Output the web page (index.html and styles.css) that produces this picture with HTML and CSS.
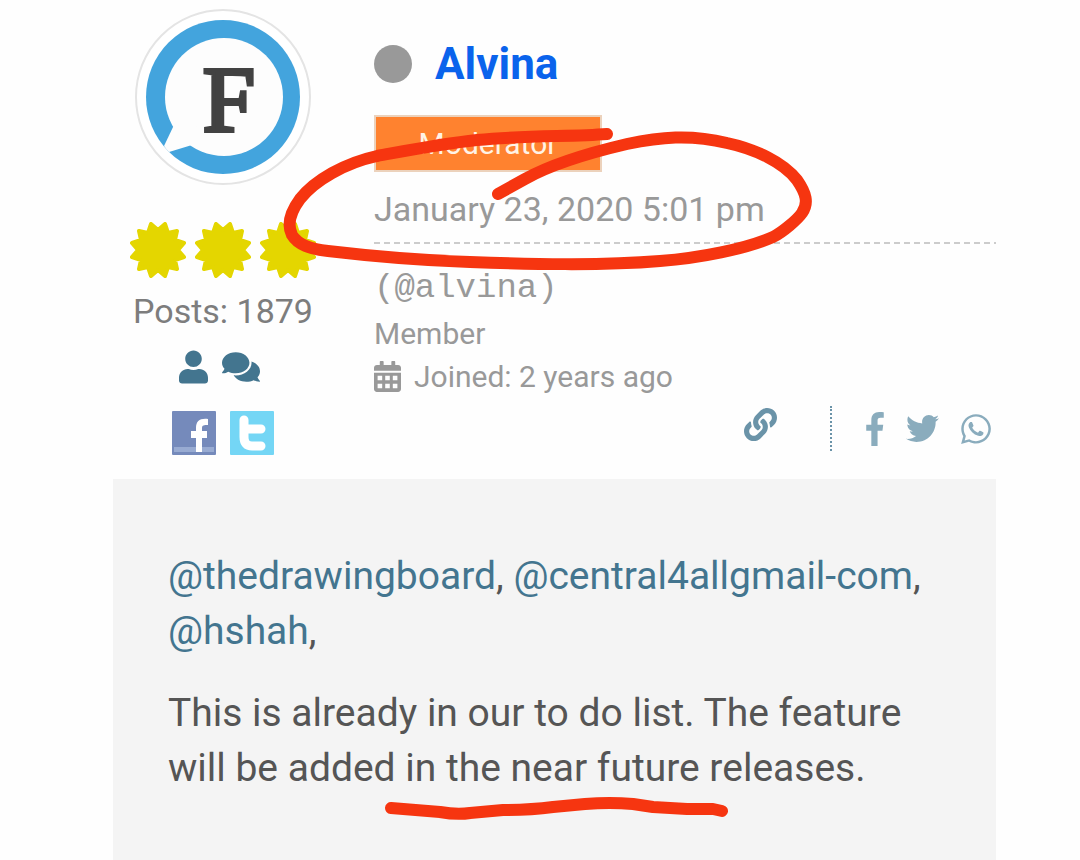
FILE: index.html
```
<!DOCTYPE html>
<html lang="en">
<head>
<meta charset="utf-8">
<meta name="viewport" content="width=device-width, initial-scale=1">
<title>Forum post</title>
<link rel="stylesheet" href="styles.css">
</head>
<body>
<article class="post">
  <header class="post-head">
    <aside class="author">
      <svg class="avatar" viewBox="0 0 176 176" role="img" aria-label="Alvina">
        <circle cx="88" cy="88" r="87" fill="#fff" stroke="#e4e4e4" stroke-width="2"/>
        <circle cx="88" cy="88" r="77" fill="#43a4dd"/>
        <circle cx="89" cy="88" r="59" fill="#fdfdfd"/>
        <path d="M39 116L29 137Q31 140 34 143L57 136L66 118Z" fill="#fdfdfd"/>
        <text class="avatar-letter" x="94" y="122" text-anchor="middle">F</text>
      </svg>
      <div class="seals">
        <svg class="seal" viewBox="-28 -28 56 56"><path d="M0-20L7-26 10-17 19-19 17-10 26-7 20 0 26 7 17 10 19 19 10 17 7 26 0 20-7 26-10 17-19 19-17 10-26 7-20 0-26-7-17-10-19-19-10-17-7-26Z"/></svg>
        <svg class="seal" viewBox="-28 -28 56 56"><path d="M0-20L7-26 10-17 19-19 17-10 26-7 20 0 26 7 17 10 19 19 10 17 7 26 0 20-7 26-10 17-19 19-17 10-26 7-20 0-26-7-17-10-19-19-10-17-7-26Z"/></svg>
        <svg class="seal" viewBox="-28 -28 56 56"><path d="M0-20L7-26 10-17 19-19 17-10 26-7 20 0 26 7 17 10 19 19 10 17 7 26 0 20-7 26-10 17-19 19-17 10-26 7-20 0-26-7-17-10-19-19-10-17-7-26Z"/></svg>
      </div>
      <div class="posts">Posts: 1879</div>
      <nav class="profile-links" aria-label="Profile">
        <a href="#profile" aria-label="Profile"><svg class="icon-user" viewBox="0 0 448 512"><path d="M224 256c70.700 0 128-57.300 128-128S294.700 0 224 0 96 57.300 96 128s57.300 128 128 128zm89.600 32h-16.700c-22.200 10.200-46.900 16-72.900 16s-50.600-5.800-72.900-16h-16.700C60.200 288 0 348.200 0 422.400V464c0 26.500 21.500 48 48 48h352c26.500 0 48-21.500 48-48v-41.600c0-74.200-60.200-134.400-134.400-134.400z"/></svg></a>
        <a href="#activity" aria-label="Activity"><svg class="icon-comments" viewBox="0 0 576 512"><path d="M416 192c0-88.400-93.100-160-208-160S0 103.600 0 192c0 34.300 14.100 65.900 38 92-13.400 30.200-35.500 54.200-35.800 54.500-2.200 2.300-2.800 5.700-1.500 8.700S4.800 352 8 352c36.600 0 66.900-12.300 88.700-25 32.200 15.700 70.300 25 111.300 25 114.900 0 208-71.600 208-160zm122 220c23.900-26 38-57.700 38-92 0-66.900-53.500-124.200-129.300-148.100.9 6.600 1.300 13.300 1.300 20.100 0 105.900-107.700 192-240 192-10.800 0-21.300-.8-31.700-1.900C207.800 439.600 281.800 480 368 480c41 0 79.100-9.200 111.300-25 21.800 12.700 52.100 25 88.700 25 3.200 0 6.100-1.900 7.300-4.800 1.300-2.900.7-6.300-1.500-8.700-.3-.3-22.400-24.200-35.800-54.500z"/></svg></a>
      </nav>
      <nav class="social" aria-label="Social profiles">
        <a href="#facebook" aria-label="Facebook"><svg viewBox="0 0 44 44"><rect width="44" height="44" rx="1" fill="#758abb"/><rect x="2" y="36" width="40" height="5" fill="#98abd2"/><path d="M24 41V27h-5v-7h5v-3c0-7 4-10 12-9v6c-4 0-6 0-6 3v3h5v7h-5v14z" fill="#fff"/></svg></a>
        <a href="#twitter" aria-label="Twitter"><svg viewBox="0 0 44 44"><rect width="44" height="44" rx="1" fill="#74d6f5"/><path d="M14 9V26Q14 35 22 35H31M14 18H31" fill="none" stroke="#fff" stroke-width="9" stroke-linecap="round" stroke-linejoin="round"/></svg></a>
      </nav>
    </aside>
    <div class="details">
      <div class="name-row"><span class="status"></span><a class="name" href="#alvina">Alvina</a></div>
      <div class="role">Moderator</div>
      <time class="date" datetime="2020-01-23T17:01">January 23, 2020 5:01 pm</time>
      <div class="handle">(@alvina)</div>
      <div class="meta">Member</div>
      <div class="meta joined"><svg class="icon-calendar" viewBox="0 0 448 512"><path fill-rule="evenodd" d="M400 64h-48V16c0-9-7-16-16-16h-32c-9 0-16 7-16 16v48H160V16c0-9-7-16-16-16h-32c-9 0-16 7-16 16v48H48C21 64 0 85 0 112v48h448v-48c0-27-21-48-48-48zM0 192v272c0 27 21 48 48 48h352c27 0 48-21 48-48V192zM60 244h76v76H60zM186 244h76v76h-76zM312 244h76v76h-76zM60 376h76v76H60zM186 376h76v76h-76zM312 376h76v76h-76z"/></svg>Joined: 2 years ago</div>
      <div class="share">
        <a class="share-link" href="#link" aria-label="Link to post"><svg class="icon-link" viewBox="0 0 512 512"><path d="M326.612 185.391c59.747 59.809 58.927 155.698.36 214.590-.11.12-.24.25-.36.37l-67.200 67.200c-59.270 59.270-155.699 59.262-214.960 0-59.270-59.260-59.270-155.700 0-214.960l37.106-37.106c9.840-9.840 26.786-3.300 27.294 10.606.648 17.722 3.826 35.527 9.690 52.721 1.986 5.822.567 12.262-3.783 16.612l-13.087 13.087c-28.026 28.026-28.905 73.660-1.155 101.960 28.024 28.579 74.086 28.749 102.325.51l67.200-67.190c28.191-28.191 28.073-73.757 0-101.830-3.701-3.694-7.429-6.564-10.341-8.569a16.037 16.037 0 0 1-6.947-12.606c-.396-10.567 3.348-21.456 11.698-29.806l21.054-21.055c5.521-5.521 14.182-6.199 20.584-1.731a152.482 152.482 0 0 1 20.522 17.197zM467.547 44.449c-59.261-59.262-155.690-59.270-214.960 0l-67.200 67.200c-.12.12-.25.25-.36.37-58.566 58.892-59.387 154.781.36 214.590a152.454 152.454 0 0 0 20.521 17.196c6.402 4.468 15.064 3.789 20.584-1.731l21.054-21.055c8.350-8.350 12.094-19.239 11.698-29.806a16.037 16.037 0 0 0-6.947-12.606c-2.912-2.005-6.640-4.875-10.341-8.569-28.073-28.073-28.191-73.639 0-101.830l67.200-67.190c28.239-28.239 74.300-28.069 102.325.51 27.750 28.300 26.872 73.934-1.155 101.960l-13.087 13.087c-4.350 4.350-5.769 10.790-3.783 16.612 5.864 17.194 9.042 34.999 9.690 52.721.509 13.906 17.454 20.446 27.294 10.606l37.106-37.106c59.271-59.259 59.271-155.699.001-214.959z"/></svg></a>
        <div class="share-targets">
          <a href="#share-facebook" aria-label="Share on Facebook"><svg class="icon-fb" viewBox="0 0 264 512"><path d="M76.700 512V283H0v-91h76.700v-71.700C76.700 42.400 124.300 0 193.800 0c33.300 0 61.900 2.500 70.200 3.600V85h-48.200c-37.800 0-45.100 18-45.100 44.300V192H256l-11.700 91h-73.600v229"/></svg></a>
          <a href="#share-twitter" aria-label="Share on Twitter"><svg class="icon-round" viewBox="0 0 512 512"><path d="M459.370 151.716c.325 4.548.325 9.097.325 13.645 0 138.720-105.583 298.558-298.558 298.558-59.452 0-114.680-17.219-161.137-47.106 8.447.974 16.568 1.299 25.340 1.299 49.055 0 94.213-16.568 130.274-44.832-46.132-.975-84.792-31.188-98.112-72.772 6.498.974 12.995 1.624 19.818 1.624 9.421 0 18.843-1.300 27.614-3.573-48.081-9.747-84.143-51.980-84.143-102.985v-1.299c13.969 7.797 30.214 12.670 47.431 13.319-28.264-18.843-46.781-51.005-46.781-87.391 0-19.492 5.197-37.360 14.294-52.954 51.655 63.675 129.300 105.258 216.365 109.807-1.624-7.797-2.599-15.918-2.599-24.040 0-57.828 46.782-104.934 104.934-104.934 30.213 0 57.502 12.670 76.670 33.137 23.715-4.548 46.456-13.320 66.599-25.340-7.798 24.366-24.366 44.833-46.132 57.827 21.117-2.273 41.584-8.122 60.426-16.243-14.292 20.791-32.161 39.308-52.628 54.253z"/></svg></a>
          <a href="#share-whatsapp" aria-label="Share on WhatsApp"><svg class="icon-wa" viewBox="0 0 448 512"><path d="M380.900 97.100C339 55.100 283.200 32 223.900 32c-122.400 0-222 99.600-222 222 0 39.100 10.200 77.300 29.600 111L0 480l117.700-30.900c32.400 17.700 68.900 27 106.100 27h.1c122.300 0 224.100-99.600 224.100-222 0-59.300-25.200-115-67.100-157zm-157 341.600c-33.200 0-65.700-8.900-94-25.700l-6.700-4-69.800 18.300L72 359.200l-4.400-7c-18.500-29.400-28.200-63.300-28.200-98.200 0-101.700 82.800-184.500 184.600-184.500 49.300 0 95.600 19.200 130.400 54.100 34.800 34.900 56.200 81.200 56.100 130.500 0 101.800-84.900 184.600-186.600 184.600zm101.200-138.200c-5.500-2.800-32.800-16.200-37.900-18-5.100-1.900-8.800-2.800-12.500 2.800-3.700 5.600-14.300 18-17.600 21.800-3.200 3.700-6.500 4.200-12 1.400-32.600-16.300-54-29.100-75.500-66-5.700-9.800 5.700-9.100 16.300-30.300 1.800-3.700.9-6.900-.5-9.700-1.400-2.800-12.500-30.100-17.100-41.200-4.500-10.800-9.100-9.300-12.500-9.500-3.200-.2-6.900-.2-10.600-.2-3.700 0-9.700 1.400-14.800 6.900-5.100 5.600-19.400 19-19.400 46.300 0 27.300 19.900 53.700 22.600 57.400 2.800 3.700 39.100 59.700 94.800 83.800 35.200 15.200 49 16.500 66.600 13.900 10.700-1.600 32.800-13.400 37.400-26.400 4.600-13 4.600-24.100 3.200-26.400-1.300-2.500-5-3.900-10.500-6.600z"/></svg></a>
        </div>
      </div>
    </div>
  </header>
  <section class="post-body">
    <p><a href="#thedrawingboard">@thedrawingboard</a>, <a href="#central4all">@central4allgmail-com</a>, <a href="#hshah">@hshah</a>,</p>
    <p>This is already in our to do list. The feature will be added in the near future releases.</p>
  </section>
  <svg class="markup" width="1080" height="860" viewBox="0 0 1080 860" aria-hidden="true">
    <path d="M607 134C570 137 530 135 477 140C440 144 410 150 377 156C345 163 315 180 300 199C289 214 287 225 292 235C298 245 310 249 328 251C370 256 410 260 470 262C530 264 600 266 660 261C700 258 745 249 773 237C783 232 798 219 802 213C809 203 806 193 797 180C783 162 755 149 727 143C690 134 660 137 627 144C580 155 550 165 525 179L498 194"/>
    <path d="M391 808L440 812Q457 815 470 813L503 810Q530 810 553 807L585 804Q610 802 633 804L653 807L687 809H713L722 811"/>
  </svg>
</article>
</body>
</html>
```
FILE: styles.css
```
* { box-sizing: border-box; }

body {
  margin: 0;
  background: #fefefe;
  font-family: Roboto, "Liberation Sans", sans-serif;
}

a { color: #43758f; text-decoration: none; }
svg { display: block; fill: currentColor; }

.post {
  position: relative;
  min-height: 100vh;
  padding: 0 84px 0 113px;
  display: flex;
  flex-direction: column;
}

.post-head {
  display: grid;
  grid-template-columns: 220px 1fr;
  gap: 41px;
  padding: 9px 0 24px;
}

.author {
  display: flex;
  flex-direction: column;
  align-items: center;
}

.avatar { width: 176px; height: 176px; }

.avatar-letter {
  font: 94px "Liberation Serif", serif;
  fill: #424242;
  stroke: #424242;
  stroke-width: 4px;
}

.seals { display: flex; gap: 9px; margin-top: 37px; }

.seal {
  width: 56px;
  height: 56px;
  fill: #e4d600;
  stroke: #e4d600;
  stroke-width: 4px;
  stroke-linejoin: round;
}

.posts {
  margin-top: 13px;
  font-size: 34px;
  line-height: 40px;
  color: #7d7d7d;
}

.profile-links {
  display: flex;
  align-items: center;
  gap: 14px;
  margin-top: 19px;
  padding-right: 8px;
}

.icon-user { width: 29px; height: 34px; }
.icon-comments { width: 38px; height: 34px; }

.social { display: flex; gap: 14px; margin-top: 27px; }
.social svg { width: 44px; height: 44px; }

.details {
  display: flex;
  flex-direction: column;
  align-items: flex-start;
  padding-top: 29px;
  color: #999;
}

.name-row { display: flex; align-items: center; gap: 23px; }

.status {
  width: 38px;
  height: 38px;
  border-radius: 50%;
  background: #999;
}

.name {
  font-size: 44px;
  line-height: 52px;
  font-weight: 700;
  color: #0a63ec;
}

.role {
  min-width: 228px;
  margin-top: 25px;
  border: 2px solid #ecd2bc;
  background: #ff822f;
  color: #fff3e6;
  font-size: 30px;
  line-height: 53px;
  text-align: center;
}

.date {
  align-self: stretch;
  padding: 17px 0 15px;
  font-size: 34px;
  line-height: 40px;
  background: repeating-linear-gradient(to right, #ccc 0 6px, transparent 6px 10px) left bottom / 100% 2px no-repeat;
}

.handle {
  font-family: "Liberation Mono", monospace;
  font-size: 34px;
  line-height: 40px;
  margin: 24px 0 4px;
}

.meta { font-size: 30px; line-height: 43px; }
.joined { display: flex; align-items: center; gap: 13px; }
.icon-calendar { width: 27px; height: 31px; }

.share {
  align-self: flex-end;
  display: flex;
  gap: 53px;
  margin-top: 8px;
  padding-right: 5px;
}

.share-link { padding-top: 2px; }
.share-link svg { color: #6a93a8; }
.icon-link { width: 33px; height: 33px; }

.share-targets {
  display: flex;
  align-items: center;
  gap: 22px;
  height: 45px;
  padding-left: 34px;
  border-left: 2px dotted #6a93a8;
}

.share-targets svg { color: #8aacbd; }
.icon-fb { width: 18px; height: 34px; }
.icon-round { width: 33px; height: 33px; }
.icon-wa { width: 30px; height: 34px; }

.post-body {
  flex: 1;
  padding: 70px 55px 40px;
  background: #f4f4f4;
  color: #555;
  font-size: 39px;
  line-height: 55px;
}

.post-body p { margin: 0 0 27px; }

.markup {
  position: absolute;
  top: 0;
  left: 0;
  fill: none;
  stroke: #f63510;
  stroke-width: 12px;
  stroke-linecap: round;
  stroke-linejoin: round;
  pointer-events: none;
}
```
